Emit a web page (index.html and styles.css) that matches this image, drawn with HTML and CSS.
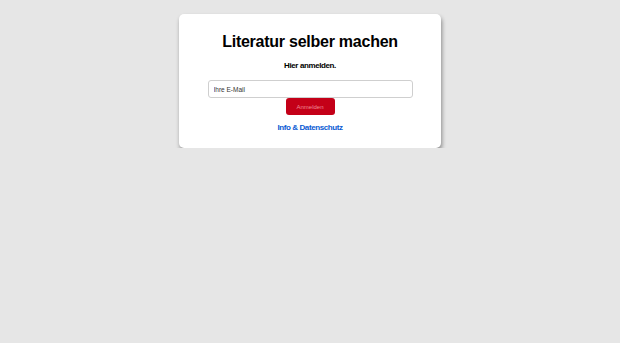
FILE: index.html
```html
<!DOCTYPE html>
<html lang="de">
<head>
    <meta charset="UTF-8">
    <meta name="viewport" content="width=device-width, initial-scale=1.0">
    <title>Literatur selber machen</title>
    <link rel="stylesheet" href="styles.css">
</head>
<body>
    <!-- Login card -->
    <div class="card">
        <h1>Literatur selber machen</h1>
        <p class="subtitle">Hier anmelden.</p>
        <form class="login-form">
            <input type="email" class="email-input" placeholder="Ihre E-Mail">
            <button type="submit" class="btn-login">Anmelden</button>
        </form>
        <a class="info-link" href="#">Info &amp; Datenschutz</a>
    </div>
</body>
</html>
```

FILE: styles.css
```css
* {
    margin: 0;
    padding: 0;
    box-sizing: border-box;
}

body {
    font-family: 'Liberation Sans', Arial, sans-serif;
    background-color: #e6e6e6;
    padding-top: 14px;
}

.card {
    width: 262px;
    margin: 0 auto;
    background-color: #ffffff;
    border-radius: 5px;
    box-shadow: 1px 3px 4px rgba(0, 0, 0, 0.4);
    padding: 19px 0 14px;
    text-align: center;
}

h1 {
    font-size: 16px;
    font-weight: bold;
    letter-spacing: -0.25px;
    color: #000000;
    line-height: 18px;
}

.subtitle {
    font-size: 8px;
    font-weight: bold;
    letter-spacing: -0.4px;
    color: #000000;
    margin-top: 10px;
    line-height: 10px;
}

.login-form {
    display: flex;
    flex-direction: column;
    align-items: center;
    margin-top: 9px;
}

.email-input {
    width: 205px;
    height: 18px;
    border: 1px solid #cfcfcf;
    border-radius: 3px;
    padding: 0 5px;
    font-family: inherit;
    font-size: 6.5px;
    color: #222222;
    outline: none;
}

.email-input::placeholder {
    color: #333333;
}

.btn-login {
    width: 49px;
    height: 17px;
    border: none;
    border-radius: 3px;
    background-color: #c40018;
    color: #f08a96;
    font-family: inherit;
    font-size: 6px;
}

.info-link {
    display: inline-block;
    margin-top: 8px;
    font-size: 8px;
    letter-spacing: -0.4px;
    line-height: 10px;
    font-weight: bold;
    color: #0b5bd3;
    text-decoration: none;
}
```
